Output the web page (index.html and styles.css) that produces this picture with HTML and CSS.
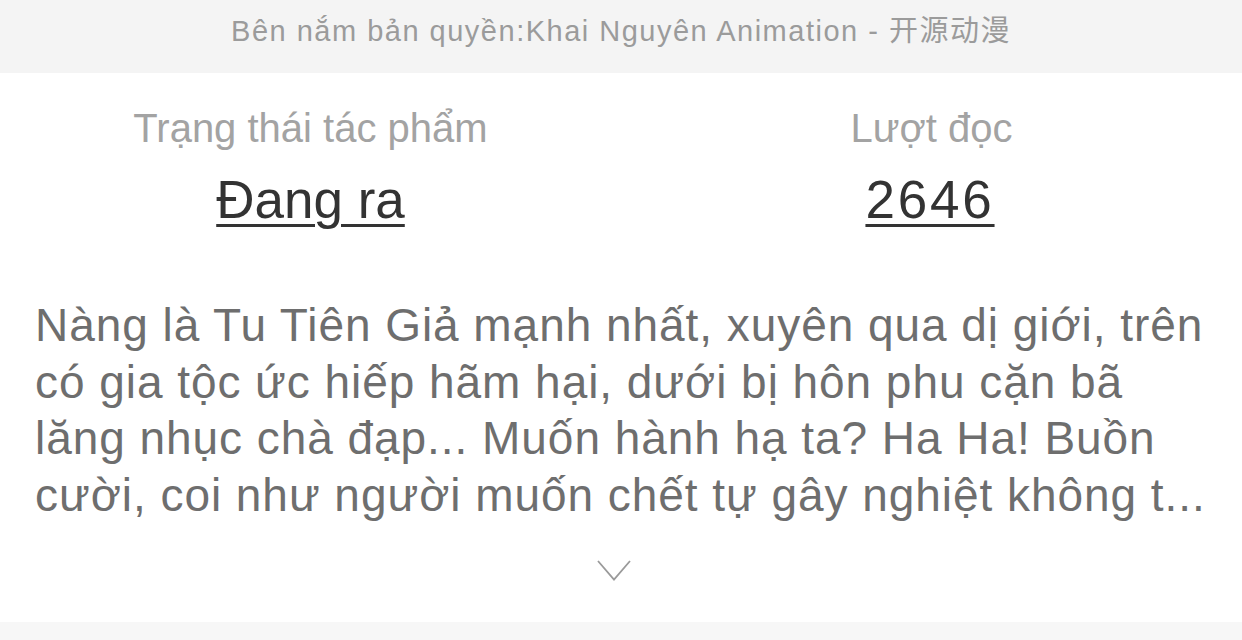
FILE: index.html
```html
<!DOCTYPE html>
<html lang="vi">
<head>
<meta charset="utf-8">
<title>Thông tin tác phẩm</title>
<link rel="stylesheet" href="styles.css">
</head>
<body>
<div class="page">
  <header class="copyright">Bên nắm bản quyền:Khai Nguyên Animation - 开源动漫</header>
  <section class="stats">
    <div class="stat">
      <div class="stat-label">Trạng thái tác phẩm</div>
      <div class="stat-value">Đang ra</div>
    </div>
    <div class="stat">
      <div class="stat-label">Lượt đọc</div>
      <div class="stat-value stat-value--num">2646</div>
    </div>
  </section>
  <section class="desc">
    <div class="desc-line">Nàng là Tu Tiên Giả mạnh nhất, xuyên qua dị giới, trên</div>
    <div class="desc-line">có gia tộc ức hiếp hãm hại, dưới bị hôn phu cặn bã</div>
    <div class="desc-line">lăng nhục chà đạp... Muốn hành hạ ta? Ha Ha! Buồn</div>
    <div class="desc-line">cười, coi như người muốn chết tự gây nghiệt không t...</div>
  </section>
  <div class="expand">
    <svg class="chevron" width="34" height="21" viewBox="0 0 34 21"><polyline points="1,1 17,19.5 33,1" fill="none" stroke="#9a9a9a" stroke-width="1.8"/></svg>
  </div>
  <div class="footer-band"></div>
</div>
</body>
</html>
```
FILE: styles.css
```css
html, body {
  margin: 0;
  padding: 0;
  background: #ffffff;
}
.page {
  width: 1242px;
  height: 640px;
  display: flex;
  flex-direction: column;
  font-family: "Liberation Sans", "Noto Sans CJK SC", sans-serif;
  overflow: hidden;
}
.copyright {
  height: 73px;
  background: #f4f4f4;
  color: #9b9b9b;
  font-size: 29px;
  letter-spacing: 1.5px;
  display: flex;
  justify-content: center;
  padding-top: 13px;
  box-sizing: border-box;
  line-height: 36px;
}
.stats {
  display: grid;
  grid-template-columns: 1fr 1fr;
  padding-top: 30px;
}
.stat {
  display: flex;
  flex-direction: column;
  align-items: center;
}
.stat-label {
  font-size: 40px;
  line-height: 50px;
  color: #a3a3a3;
}
.stat-value {
  margin-top: 17px;
  font-size: 53px;
  line-height: 60px;
  color: #333333;
  text-decoration: underline;
  text-decoration-thickness: 3px;
  text-underline-offset: 6px;
}
.stat-value--num {
  letter-spacing: 2.8px;
  margin-left: -3px;
}
.desc {
  margin-top: 67px;
  padding: 0 35px;
  font-size: 46px;
  letter-spacing: 0.95px;
  line-height: 56.5px;
  color: #6e6e6e;
}
.desc-line {
  white-space: nowrap;
}
.expand {
  margin-top: 37px;
  display: flex;
  justify-content: center;
}
.chevron {
  display: block;
  margin-left: -14px;
}
.footer-band {
  margin-top: auto;
  height: 18px;
  background: #f7f7f7;
}
```
